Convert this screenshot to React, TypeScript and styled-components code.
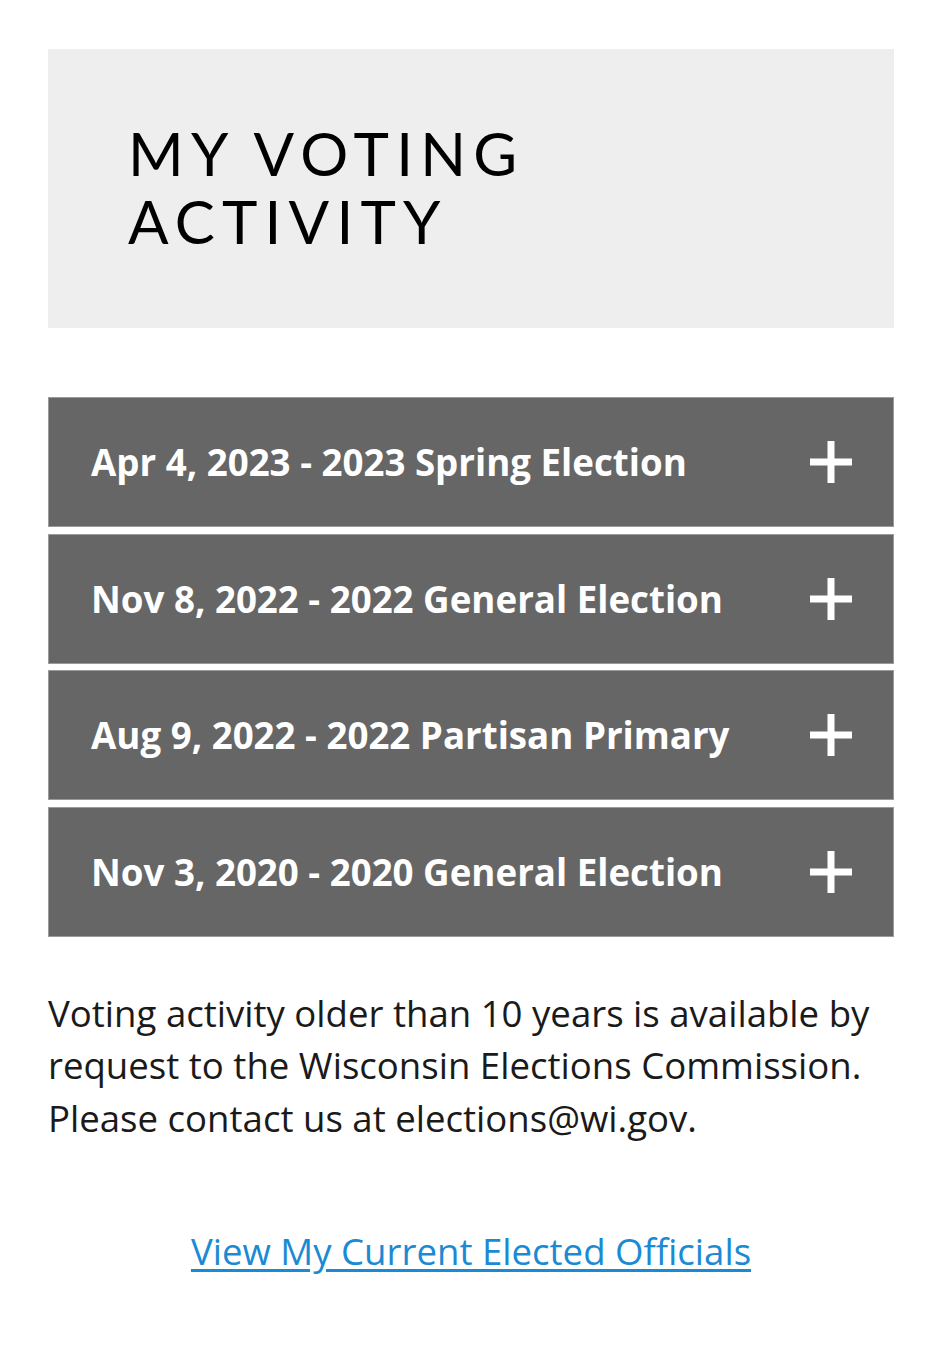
import React from 'react'
import styled, { createGlobalStyle } from 'styled-components'

const GlobalStyle = createGlobalStyle`
  html, body {
    margin: 0;
    padding: 0;
    background: #fff;
  }
  body {
    font-family: 'Open Sans', 'Liberation Sans', sans-serif;
  }
  * {
    box-sizing: border-box;
  }
`

const Page = styled.main`
  padding: 49px 46px 60px 48px;
`

const Banner = styled.header`
  display: flex;
  align-items: center;
  height: 279px;
  padding: 0 0 4px 80px;
  background: #eeeeee;
`

const Title = styled.h1`
  margin: 0;
  font-family: Lato, 'Open Sans', sans-serif;
  font-size: 60px;
  font-weight: 400;
  line-height: 68px;
  letter-spacing: 0.12em;
  text-transform: uppercase;
  color: #000;
`

const List = styled.ul`
  display: flex;
  flex-direction: column;
  gap: 6.6px;
  margin: 69px 0 0;
  padding: 0;
  list-style: none;
`

const Row = styled.li`
  display: flex;
  align-items: center;
  justify-content: space-between;
  height: 130px;
  padding: 0 41px 0 42px;
  background: #666666;
  border: 1px solid #9a9a9a;
  cursor: pointer;
`

const RowLabel = styled.span`
  font-family: 'Open Sans', sans-serif;
  font-size: 36.7px;
  font-weight: 700;
  color: #fff;
  white-space: nowrap;
`

const PlusIcon = styled.svg`
  flex: none;
  width: 42px;
  height: 42px;
`

const Note = styled.p`
  margin: 50px 0 0;
  font-size: 36.6px;
  line-height: 52.5px;
  color: #1a1a1a;
`

const LinkWrap = styled.div`
  margin-top: 81px;
  text-align: center;
  font-size: 36.6px;
  line-height: 52px;
`

const Link = styled.a`
  color: #1a8bd3;
  text-decoration: underline;
  text-underline-offset: 4px;
`

const elections = [
  'Apr 4, 2023 - 2023 Spring Election',
  'Nov 8, 2022 - 2022 General Election',
  'Aug 9, 2022 - 2022 Partisan Primary',
  'Nov 3, 2020 - 2020 General Election',
]

const Plus = () => (
  <PlusIcon viewBox="0 0 42 42" aria-hidden="true">
    <rect x="0" y="17.5" width="42" height="7" fill="#fff" />
    <rect x="17.5" y="0" width="7" height="42" fill="#fff" />
  </PlusIcon>
)

export default function App() {
  return (
    <>
      <GlobalStyle />
      <Page>
        <Banner>
          <Title>
            My Voting
            <br />
            Activity
          </Title>
        </Banner>
        <List>
          {elections.map((label) => (
            <Row key={label}>
              <RowLabel>{label}</RowLabel>
              <Plus />
            </Row>
          ))}
        </List>
        <Note>
          Voting activity older than 10 years is available by request to the
          Wisconsin Elections Commission. Please contact us at
          elections@wi.gov.
        </Note>
        <LinkWrap>
          <Link href="#">View My Current Elected Officials</Link>
        </LinkWrap>
      </Page>
    </>
  )
}
